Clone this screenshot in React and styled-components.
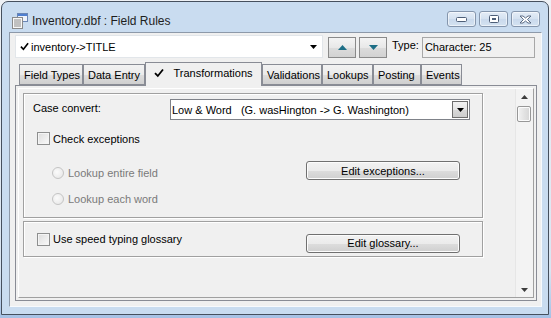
import React from "react";
import styled, { createGlobalStyle } from "styled-components";

const Global = createGlobalStyle`
  html, body { margin: 0; padding: 0; }
  body {
    width: 551px;
    height: 318px;
    overflow: hidden;
    background: linear-gradient(#eef1f5, #d9e5f2 85%, #a6c1e5);
    font-family: "Liberation Sans", Arial, sans-serif;
    font-size: 11px;
    color: #000;
  }
`;

const Window = styled.div`
  box-sizing: border-box;
  margin: 1px 0 0 1px;
  width: 548px;
  height: 314px;
  border: 1px solid #46505e;
  border-radius: 7px 7px 0 0;
  background: #c9dcf0;
  display: flex;
  flex-direction: column;
`;

const TitleBar = styled.div`
  height: 30px;
  box-sizing: border-box;
  padding: 7px 8px 0 10px;
  display: flex;
  align-items: center;
`;

const Title = styled.div`
  flex: 1;
  margin-left: 4px;
  font-size: 12px;
  color: #1e1e1e;
`;

const CapButtons = styled.div`
  display: flex;
  gap: 3px;
  margin-top: -3px;
`;

const CapButton = styled.div`
  width: 29px;
  height: 16px;
  box-sizing: border-box;
  border: 1px solid #8596ad;
  border-radius: 3px;
  background: linear-gradient(#e4edf7, #d4e1f0 50%, #c9d9ec 51%, #d4e2f1);
  box-shadow: inset 0 0 0 1px rgba(255, 255, 255, 0.55);
  display: flex;
  align-items: center;
  justify-content: center;
`;

const Client = styled.div`
  flex: 1;
  margin: 0 6px 7px 7px;
  border: 1px solid;
  border-color: #8d99a9 #f7fafd #f7fafd #8d99a9;
  background: #f0f0f0;
  display: flex;
  flex-direction: column;
`;

const TopRow = styled.div`
  display: flex;
  align-items: flex-start;
  padding: 2px 0 0 5px;
`;

const FieldCombo = styled.div`
  width: 308px;
  height: 23px;
  box-sizing: border-box;
  background: #fff;
  border: 1px solid #e2e6ea;
  display: flex;
  align-items: center;
  padding-left: 4px;
  gap: 2px;
`;

const ComboText = styled.span`
  flex: 1;
`;

const ComboArrow = styled.div`
  width: 18px;
  display: flex;
  justify-content: center;
`;

const NavButton = styled.div`
  width: 28px;
  height: 21px;
  margin: 2px 0 0 ${(p) => p.$gap}px;
  box-sizing: border-box;
  border: 1px solid #8a8a8a;
  background: linear-gradient(#f4f4f4, #e8e8e8 50%, #dcdcdc 51%, #d2d2d2);
  display: flex;
  align-items: center;
  justify-content: center;
`;

const TypeLabel = styled.span`
  margin: 4px 0 0 5px;
  color: #000;
`;

const TypeBox = styled.div`
  width: 113px;
  height: 21px;
  margin: 2px 0 0 3px;
  box-sizing: border-box;
  border: 1px solid #a7a7a7;
  background: #f0f0f0;
  padding: 3px 0 0 2px;
`;

const TabStrip = styled.div`
  display: flex;
  align-items: flex-end;
  height: 24px;
  margin-top: 3px;
  padding-left: 9px;
  position: relative;
  z-index: 1;
`;

const Tab = styled.div`
  width: ${(p) => p.$w}px;
  box-sizing: border-box;
  height: ${(p) => (p.$active ? 24 : 21)}px;
  margin-bottom: ${(p) => (p.$active ? -1 : 0)}px;
  border: 1px solid #898c95;
  border-bottom: ${(p) => (p.$active ? "none" : "1px solid #898c95")};
  background: ${(p) =>
    p.$active ? "#f0f0f0" : "linear-gradient(#f2f2f2, #ebebeb 50%, #dddddd 51%, #cfcfcf)"};
  display: flex;
  align-items: center;
  justify-content: ${(p) => (p.$active ? "center" : "flex-start")};
  padding-left: ${(p) => (p.$active ? 0 : 4)}px;
  padding-bottom: ${(p) => (p.$active ? 3 : 0)}px;
  gap: 9px;
  white-space: nowrap;
`;

const Panel = styled.div`
  margin: 0 4px 0 5px;
  height: 216px;
  box-sizing: border-box;
  border: 1px solid #898c95;
  background: #f0f0f0;
  padding: 2px;
  display: flex;
`;

const ScrollView = styled.div`
  flex: 1;
  display: flex;
  border: 1px solid;
  border-color: #ffffff #a0a0a0 #a0a0a0 #ffffff;
`;

const Content = styled.div`
  flex: 1;
  padding: 4px 0 0 4px;
  display: flex;
  flex-direction: column;
  gap: 3px;
`;

const Group = styled.div`
  width: 460px;
  height: ${(p) => p.$h}px;
  box-sizing: border-box;
  border: 1px solid #a0a0a0;
  box-shadow: 1px 1px 0 #ffffff, inset 1px 1px 0 #ffffff;
  padding: 5px 0 0 9px;
  display: flex;
  flex-direction: column;
`;

const Row = styled.div`
  display: flex;
  align-items: center;
  height: ${(p) => p.$h}px;
  padding-left: ${(p) => p.$indent || 0}px;
`;

const FieldLabel = styled.span`
  width: 137px;
  margin-top: -3px;
`;

const Select = styled.div`
  width: 300px;
  height: 21px;
  box-sizing: border-box;
  border: 1px solid #7f8289;
  background: #fff;
  display: flex;
  align-items: center;
  padding: 0 1px 0 1px;
`;

const SelectText = styled.span`
  flex: 1;
  white-space: pre;
`;

const DropButton = styled.div`
  width: 16px;
  height: 17px;
  box-sizing: border-box;
  border: 1px solid #6e6e6e;
  background: linear-gradient(#f2f2f2, #e6e6e6 50%, #d9d9d9 51%, #cdcdcd);
  display: flex;
  align-items: center;
  justify-content: center;
`;

const Check = styled.span`
  width: 13px;
  height: 13px;
  box-sizing: border-box;
  border: 1px solid #8e8f8f;
  background: linear-gradient(135deg, #dcdcdc, #fafafa);
  box-shadow: inset 0 0 0 1px #f4f4f4;
  margin-right: 3px;
`;

const Radio = styled.span`
  width: 12px;
  height: 12px;
  box-sizing: border-box;
  border-radius: 50%;
  border: 1px solid #c4c4c4;
  background: radial-gradient(circle at 40% 40%, #fbfbfb, #e4e4e4);
  margin-right: 4px;
`;

const Disabled = styled.span`
  color: #7a7a7a;
`;

const Spacer = styled.div`
  flex: 1;
`;

const Button = styled.div`
  width: 154px;
  height: 19px;
  box-sizing: border-box;
  border: 1px solid #707070;
  border-radius: 3px;
  background: linear-gradient(#f2f2f2, #ebebeb 50%, #dddddd 51%, #cfcfcf);
  box-shadow: inset 0 0 0 1px #fcfcfc;
  display: flex;
  align-items: center;
  justify-content: center;
  margin: ${(p) => p.$shift || 0}px 22px 0 0;
`;

const ScrollBar = styled.div`
  width: 17px;
  background: #f3f3f3;
  border-left: 1px solid #e6e6e6;
  display: flex;
  flex-direction: column;
  align-items: center;
`;

const ScrollArrow = styled.div`
  height: 15px;
  display: flex;
  align-items: center;
  justify-content: center;
`;

const Thumb = styled.div`
  width: 14px;
  height: 16px;
  margin: 2px 2px 0 0;
  box-sizing: border-box;
  border: 1px solid #979797;
  border-radius: 2px;
  background: linear-gradient(90deg, #f3f3f3, #e3e3e3 50%, #d6d6d6);
  box-shadow: inset 0 0 0 1px #fbfbfb;
`;

const Tick = ({ size = 10 }) => (
  <svg width={size} height={size} viewBox="0 0 10 10">
    <path d="M1 5.2 L3.8 8 L9 1.5" fill="none" stroke="#000" strokeWidth="1.8" />
  </svg>
);

const Tri = ({ dir = "down", color = "#000", w = 7, h = 4 }) => (
  <svg width={w} height={h} viewBox={`0 0 ${w} ${h}`}>
    <polygon
      points={dir === "down" ? `0,0 ${w},0 ${w / 2},${h}` : `0,${h} ${w},${h} ${w / 2},0`}
      fill={color}
    />
  </svg>
);

const AppIcon = () => (
  <svg width="16" height="16" viewBox="0 0 16 16">
    <rect x="5.5" y="0.5" width="10" height="8" fill="#eef3fb" stroke="#6b86b4" />
    <rect x="6" y="1" width="9" height="2" fill="#4f7fd0" />
    <rect x="0.5" y="4.5" width="10" height="11" fill="#f7f7f7" stroke="#8a8a8a" />
    <line x1="2" y1="7" x2="9" y2="7" stroke="#8a8a8a" />
    <line x1="2" y1="9" x2="9" y2="9" stroke="#8a8a8a" />
    <line x1="2" y1="11" x2="9" y2="11" stroke="#8a8a8a" />
    <line x1="2" y1="13" x2="9" y2="13" stroke="#8a8a8a" />
  </svg>
);

const tabs = [
  ["Field Types", 64],
  ["Data Entry", 62],
  ["Transformations", 117, true],
  ["Validations", 60],
  ["Lookups", 51],
  ["Posting", 48],
  ["Events", 41],
];

export default function App() {
  return (
    <>
      <Global />
      <Window>
        <TitleBar>
          <AppIcon />
          <Title>Inventory.dbf : Field Rules</Title>
          <CapButtons>
            <CapButton>
              <svg width="11" height="5" viewBox="0 0 11 5">
                <rect x="0.5" y="0.5" width="10" height="4" rx="1" fill="#fff" stroke="#4e5f78" />
              </svg>
            </CapButton>
            <CapButton>
              <svg width="10" height="8" viewBox="0 0 10 8">
                <rect x="0.5" y="0.5" width="9" height="7" rx="1" fill="#fff" stroke="#4e5f78" />
                <rect x="3" y="3" width="4" height="2" fill="#4e5f78" />
              </svg>
            </CapButton>
            <CapButton>
              <svg width="13" height="9" viewBox="0 0 13 9">
                <path
                  d="M1 1 L4 1 L6.5 3 L9 1 L12 1 L8.5 4.5 L12 8 L9 8 L6.5 6 L4 8 L1 8 L4.5 4.5 Z"
                  fill="#fff"
                  stroke="#4e5f78"
                  strokeWidth="0.9"
                />
              </svg>
            </CapButton>
          </CapButtons>
        </TitleBar>
        <Client>
          <TopRow>
            <FieldCombo>
              <Tick size={9} />
              <ComboText>inventory-&gt;TITLE</ComboText>
              <ComboArrow>
                <Tri />
              </ComboArrow>
            </FieldCombo>
            <NavButton $gap={5}>
              <Tri dir="up" color="#1d6e86" w={9} h={5} />
            </NavButton>
            <NavButton $gap={3}>
              <Tri color="#1d6e86" w={9} h={5} />
            </NavButton>
            <TypeLabel>Type:</TypeLabel>
            <TypeBox>Character: 25</TypeBox>
          </TopRow>
          <TabStrip>
            {tabs.map(([label, w, active]) => (
              <Tab key={label} $w={w} $active={active}>
                {active && <Tick size={10} />}
                {label}
              </Tab>
            ))}
          </TabStrip>
          <Panel>
            <ScrollView>
              <Content>
                <Group $h={125}>
                  <Row $h={21}>
                    <FieldLabel>Case convert:</FieldLabel>
                    <Select>
                      <SelectText>Low &amp; Word   (G. wasHington -&gt; G. Washington)</SelectText>
                      <DropButton>
                        <Tri />
                      </DropButton>
                    </Select>
                  </Row>
                  <Row $h={37} $indent={4}>
                    <Check />
                    Check exceptions
                  </Row>
                  <Row $h={31} $indent={19}>
                    <Radio />
                    <Disabled>Lookup entire field</Disabled>
                    <Spacer />
                    <Button $shift={-4}>Edit exceptions...</Button>
                  </Row>
                  <Row $h={22} $indent={19}>
                    <Radio />
                    <Disabled>Lookup each word</Disabled>
                  </Row>
                </Group>
                <Group $h={36}>
                  <Row $h={24} $indent={4}>
                    <Check />
                    Use speed typing glossary
                    <Spacer />
                    <Button $shift={8}>Edit glossary...</Button>
                  </Row>
                </Group>
              </Content>
              <ScrollBar>
                <ScrollArrow>
                  <Tri dir="up" color="#3c3c3c" />
                </ScrollArrow>
                <Thumb />
                <Spacer />
                <ScrollArrow>
                  <Tri color="#3c3c3c" />
                </ScrollArrow>
              </ScrollBar>
            </ScrollView>
          </Panel>
        </Client>
      </Window>
    </>
  );
}
